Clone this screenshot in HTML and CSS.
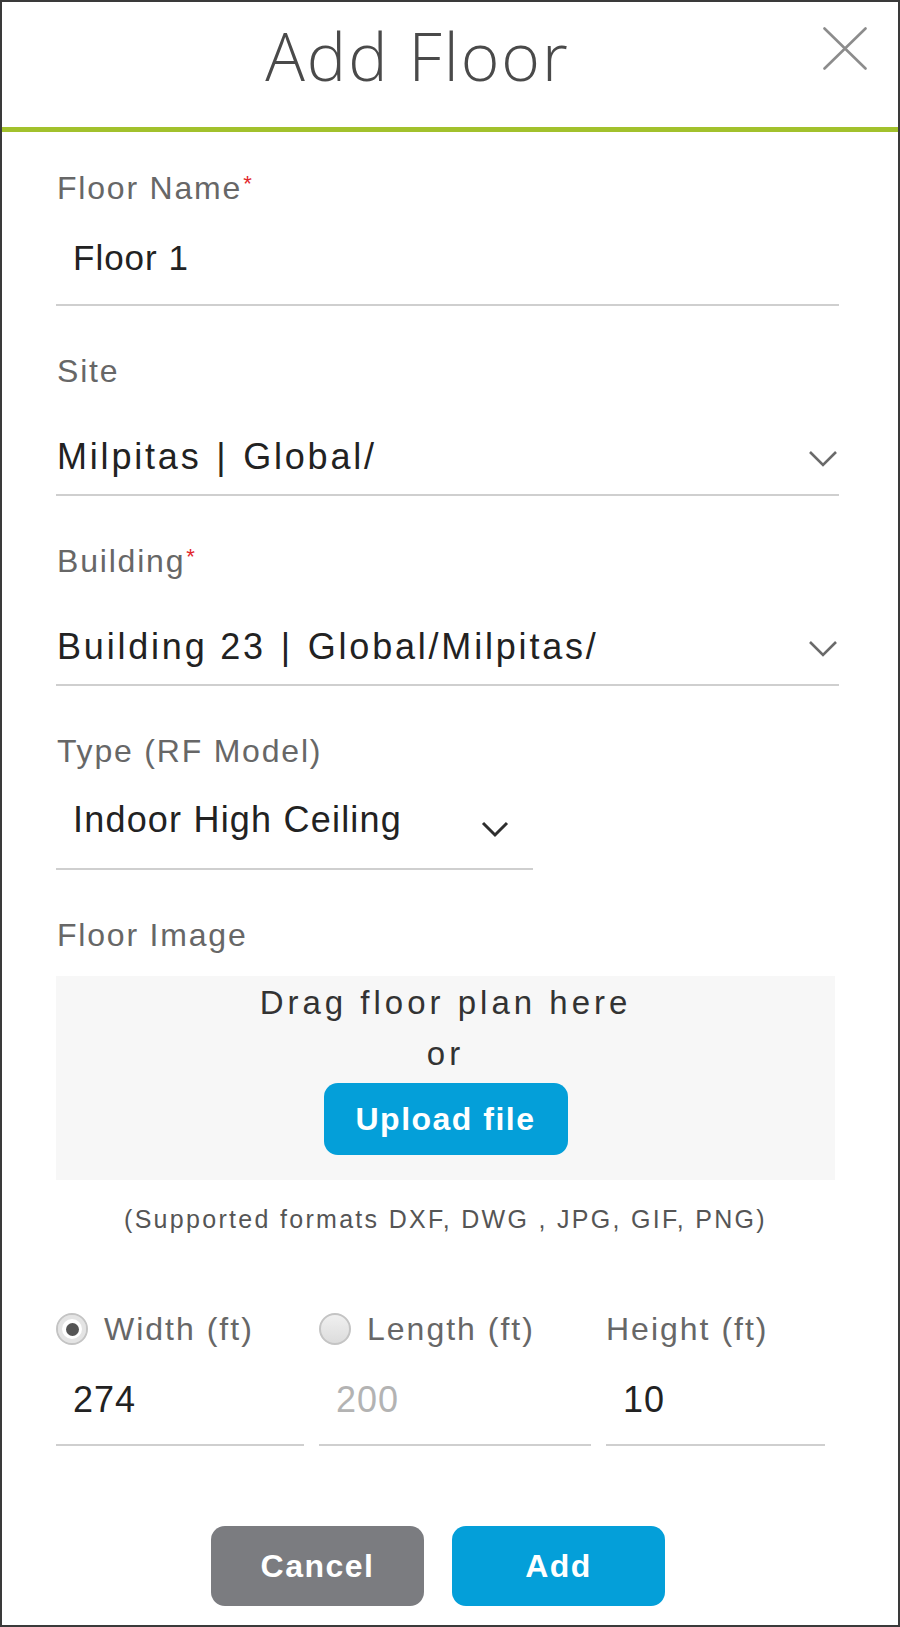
FILE: index.html
```html
<!DOCTYPE html>
<html lang="en">
<head>
<meta charset="utf-8">
<title>Add Floor</title>
<link rel="stylesheet" href="styles.css">
</head>
<body>
<div class="dialog">
  <header class="dlg-head">
    <h1 class="dlg-title">Add Floor</h1>
    <button class="close" type="button" aria-label="Close">
      <svg width="44" height="43" viewBox="0 0 44 43"><path d="M1.5 1.5 L42.5 41.5 M42.5 1.5 L1.5 41.5" stroke="#8c8c8c" stroke-width="2.6" fill="none" stroke-linecap="round"/></svg>
    </button>
  </header>
  <div class="dlg-body">
    <div class="field">
      <div class="label">Floor Name<span class="req">*</span></div>
      <div class="input first">Floor 1</div>
    </div>
    <div class="field gap-md">
      <div class="label">Site</div>
      <div class="select">
        <span class="sel-text">Milpitas <span class="pipe">|</span> Global/</span>
        <svg class="chev" width="30" height="18" viewBox="0 0 30 18"><path d="M2 2 L15 15 L28 2" stroke="#6a6a6a" stroke-width="2.6" fill="none"/></svg>
      </div>
    </div>
    <div class="field gap-md">
      <div class="label">Building<span class="req">*</span></div>
      <div class="select">
        <span class="sel-text">Building 23 <span class="pipe">|</span> Global/Milpitas/</span>
        <svg class="chev" width="30" height="18" viewBox="0 0 30 18"><path d="M2 2 L15 15 L28 2" stroke="#6a6a6a" stroke-width="2.6" fill="none"/></svg>
      </div>
    </div>
    <div class="field gap-md">
      <div class="label">Type (RF Model)</div>
      <div class="select type">
        <span class="sel-text type-text">Indoor High Ceiling</span>
        <svg class="chev chev-dark" width="28" height="17" viewBox="0 0 28 17"><path d="M2 2 L14 14 L26 2" stroke="#2e2e2e" stroke-width="3" fill="none"/></svg>
      </div>
    </div>
    <div class="field gap-md">
      <div class="label">Floor Image</div>
      <div class="dropzone">
        <div class="dz-line">Drag floor plan here</div>
        <div class="dz-line">or</div>
        <button class="btn btn-upload" type="button">Upload file</button>
      </div>
      <div class="formats">(Supported formats DXF, DWG , JPG, GIF, PNG)</div>
    </div>
    <div class="dims">
      <div class="dim">
        <div class="dim-label"><span class="radio checked"></span>Width (ft)</div>
        <div class="dim-input">274</div>
      </div>
      <div class="dim">
        <div class="dim-label"><span class="radio"></span>Length (ft)</div>
        <div class="dim-input placeholder">200</div>
      </div>
      <div class="dim">
        <div class="dim-label">Height (ft)</div>
        <div class="dim-input">10</div>
      </div>
    </div>
    <div class="actions">
      <button class="btn btn-cancel" type="button">Cancel</button>
      <button class="btn btn-add" type="button">Add</button>
    </div>
  </div>
</div>
</body>
</html>
```
FILE: styles.css
```css
* { box-sizing: border-box; }
html, body { margin: 0; padding: 0; background: #fff; }
body { font-family: "Liberation Sans", Arial, sans-serif; color: #2a2a2a; }

.dialog {
  width: 900px;
  height: 1627px;
  border: 2px solid #3a3a3a;
  background: #fff;
  display: flex;
  flex-direction: column;
}

.dlg-head {
  height: 130px;
  padding: 13px 31px 0 10px;
  display: flex;
  align-items: flex-start;
  border-bottom: 5px solid #a2c12c;
  flex: none;
}
.dlg-title {
  flex: 1;
  margin: 0;
  text-align: center;
  font-family: "Open Sans", sans-serif;
  font-weight: 300;
  font-size: 66px;
  line-height: 80px;
  color: #4a4a4a;
  letter-spacing: 2px;
}
.close {
  margin-top: 12px;
  width: 44px;
  height: 43px;
  padding: 0;
  border: 0;
  background: none;
  display: block;
}
.close svg { display: block; }

.dlg-body {
  padding: 36px 59px 0 54px;
}

.label {
  font-size: 32px;
  line-height: 40px;
  color: #676767;
  letter-spacing: 1.8px;
  padding-left: 1px;
}
.req {
  color: #e2262b;
  font-size: 22px;
  line-height: 0;
  vertical-align: 8px;
  letter-spacing: 0;
  margin-left: 1px;
}

.gap-md { margin-top: 45px; }

.input {
  font-size: 35px;
  line-height: 48px;
  color: #222;
  letter-spacing: 1px;
  border-bottom: 2px solid #cfcfcf;
}
.input.first {
  margin-top: 26px;
  padding: 0 0 22px 17px;
}

.select {
  margin-top: 42px;
  display: flex;
  align-items: center;
  justify-content: space-between;
  padding: 0 1px 13px 1px;
  border-bottom: 2px solid #cfcfcf;
  font-size: 36px;
  line-height: 48px;
  color: #222;
}
.sel-text { letter-spacing: 2.8px; }
.pipe { margin: 0 2px; }
.chev { display: block; flex: none; margin-top: 3px; }

.select.type {
  margin-top: 25px;
  width: 477px;
  padding: 0 24px 24px 17px;
}
.type-text { letter-spacing: 1.2px; }
.chev-dark { margin-top: 18px; }

.dropzone {
  margin-top: 21px;
  width: 779px;
  background: #f7f7f7;
  padding: 1px 0 25px;
  display: flex;
  flex-direction: column;
  align-items: center;
}
.dz-line {
  font-size: 33px;
  line-height: 51px;
  color: #333;
  letter-spacing: 4px;
}
.btn {
  border: 0;
  border-radius: 14px;
  color: #fff;
  font-family: "Liberation Sans", Arial, sans-serif;
  font-weight: 700;
  padding: 0;
  display: flex;
  align-items: center;
  justify-content: center;
}
.btn-upload {
  margin-top: 4px;
  width: 244px;
  height: 72px;
  background: #049fd9;
  font-size: 32px;
  letter-spacing: 1.5px;
}

.formats {
  margin-top: 23px;
  width: 779px;
  text-align: center;
  font-size: 25px;
  line-height: 32px;
  color: #555;
  letter-spacing: 2.3px;
}

.dims {
  margin-top: 74px;
  display: grid;
  grid-template-columns: 248px 272px 219px;
  column-gap: 15px;
}
.dim-label {
  display: flex;
  align-items: center;
  font-size: 32px;
  line-height: 40px;
  color: #676767;
  letter-spacing: 2px;
}
.radio {
  width: 32px;
  height: 32px;
  border-radius: 50%;
  border: 2px solid #c4c4c4;
  background: linear-gradient(#f0f0f0, #dcdcdc);
  margin-right: 16px;
  flex: none;
  display: flex;
  align-items: center;
  justify-content: center;
}
.radio.checked {
  background: #fff;
  box-shadow: inset 0 0 0 4px #e4e4e4;
}
.radio.checked::after {
  content: "";
  width: 13px;
  height: 13px;
  border-radius: 50%;
  background: #555;
}
.dim-input {
  margin-top: 27px;
  padding: 0 0 20px 17px;
  font-size: 36px;
  line-height: 48px;
  color: #222;
  letter-spacing: 1px;
  border-bottom: 2px solid #cfcfcf;
}
.dim-input.placeholder { color: #b3b3b3; }

.actions {
  margin-top: 80px;
  display: flex;
  justify-content: center;
  gap: 28px;
  padding-right: 19px;
}
.btn-cancel, .btn-add {
  width: 213px;
  height: 80px;
  font-size: 32px;
  letter-spacing: 1.5px;
}
.btn-cancel { background: #7b7c80; }
.btn-add { background: #049fd9; }
```
